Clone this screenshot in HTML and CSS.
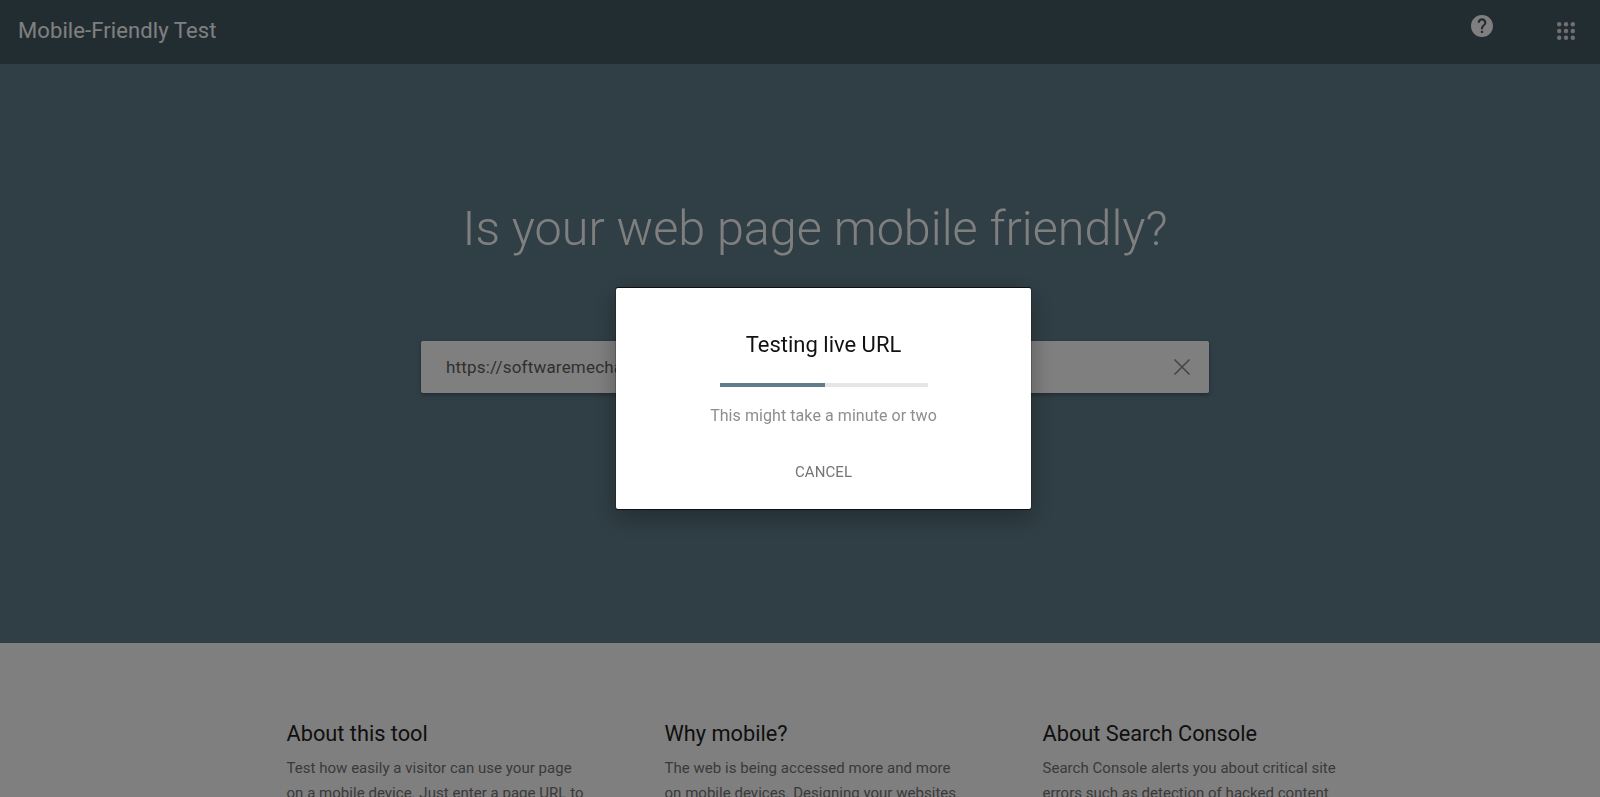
FILE: index.html
```html
<!DOCTYPE html>
<html lang="en">
<head>
    <meta charset="UTF-8">
    <meta name="viewport" content="width=device-width, initial-scale=1.0">
    <title>Mobile-Friendly Test</title>
    <link rel="stylesheet" href="styles.css">
</head>
<body>
    <header class="top-bar">
        <div class="app-title">Mobile-Friendly Test</div>
        <div class="top-actions">
            <svg class="help-icon" viewBox="0 0 24 24" aria-label="Help">
                <path fill="#fff" d="M12 1C5.9 1 1 5.9 1 12s4.900 11 11 11 11-4.900 11-11S18.100 1 12 1zm1.100 18h-2.200v-2.200h2.200V19zm2.300-7.900l-1 1c-.8.800-1.300 1.500-1.300 3.100h-2.200v-.5c0-1.200.5-2.300 1.300-3.100l1.400-1.400c.4-.4.600-.9.600-1.500 0-1.200-1-2.200-2.200-2.200S9.800 7.500 9.800 8.700H7.600c0-2.400 2-4.400 4.400-4.400s4.400 2 4.400 4.400c0 1-.4 1.800-1 2.400z"/>
            </svg>
            <svg class="apps-icon" viewBox="0 0 18 18" aria-label="Apps">
                <circle cx="2.200" cy="2.200" r="2.200"/><circle cx="9" cy="2.200" r="2.200"/><circle cx="15.800" cy="2.200" r="2.200"/>
                <circle cx="2.200" cy="9" r="2.200"/><circle cx="9" cy="9" r="2.200"/><circle cx="15.800" cy="9" r="2.200"/>
                <circle cx="2.200" cy="15.800" r="2.200"/><circle cx="9" cy="15.800" r="2.200"/><circle cx="15.800" cy="15.800" r="2.200"/>
            </svg>
        </div>
    </header>

    <section class="hero">
        <h1>Is your web page mobile friendly?</h1>
        <div class="url-box">
            <span class="url-text">https://softwaremechanic.example/</span>
            <svg class="clear-icon" viewBox="0 0 18 18" aria-label="Clear">
                <path d="M1.500 1.500l15 15M16.500 1.500l-15 15"/>
            </svg>
        </div>
    </section>

    <section class="info">
        <div class="info-col">
            <h2>About this tool</h2>
            <p>Test how easily a visitor can use your page on a mobile device. Just enter a page URL to</p>
        </div>
        <div class="info-col">
            <h2>Why mobile?</h2>
            <p>The web is being accessed more and more on mobile devices. Designing your websites</p>
        </div>
        <div class="info-col">
            <h2>About Search Console</h2>
            <p>Search Console alerts you about critical site errors such as detection of hacked content</p>
        </div>
    </section>

    <!-- Dimmed backdrop + dialog -->
    <div class="scrim">
        <div class="dialog">
            <div class="dialog-title">Testing live URL</div>
            <div class="progress"><div class="progress-fill"></div></div>
            <div class="dialog-note">This might take a minute or two</div>
            <button class="cancel-btn">CANCEL</button>
        </div>
    </div>
</body>
</html>
```

FILE: styles.css
```css
html, body {
    height: 100%;
}

body {
    margin: 0;
    font-family: Roboto, Arial, sans-serif;
    background-color: #fff;
    overflow: hidden;
}

.top-bar {
    height: 64px;
    background-color: #455a64;
    display: flex;
    align-items: center;
    justify-content: space-between;
    padding: 0 25px 4px 18px;
    box-sizing: border-box;
}

.app-title {
    color: #fff;
    font-size: 22px;
    font-weight: 400;
    letter-spacing: 0.1px;
}

.top-actions {
    display: flex;
    align-items: center;
    gap: 63px;
}

.help-icon {
    width: 24px;
    height: 24px;
    display: block;
    margin-bottom: 9px;
}

.apps-icon {
    width: 18px;
    height: 18px;
    display: block;
    fill: #e0e0e0;
    margin-top: 1px;
}

.hero {
    height: 579px;
    background-color: #607d8b;
    box-sizing: border-box;
    padding: 137px 0 0 30px;
    display: flex;
    flex-direction: column;
    align-items: center;
}

h1 {
    margin: 0;
    color: #fff;
    font-size: 48.5px;
    font-weight: 300;
    line-height: 56px;
}

.url-box {
    width: 788px;
    height: 52px;
    margin-top: 84px;
    background-color: #fff;
    border-radius: 2px;
    box-shadow: 0 2px 4px rgba(0, 0, 0, 0.3);
    display: flex;
    align-items: center;
    justify-content: space-between;
    padding: 0 18px 0 25px;
    box-sizing: border-box;
}

.url-text {
    font-size: 17px;
    letter-spacing: 0.2px;
    color: #5f5f5f;
}

.clear-icon {
    width: 18px;
    height: 18px;
    fill: none;
    stroke: #8a8a8a;
    stroke-width: 1.6;
}

.info {
    display: flex;
    padding: 77px 0 0 286.5px;
}

.info-col {
    width: 300px;
    margin-right: 78px;
}

h2 {
    margin: 0;
    font-size: 21.75px;
    font-weight: 400;
    line-height: 28px;
    color: #212121;
}

.info-col p {
    margin: 8px 0 0;
    font-size: 15px;
    letter-spacing: 0.03px;
    line-height: 25px;
    color: #757575;
}

/* Backdrop over the whole page */
.scrim {
    position: fixed;
    top: 0;
    left: 0;
    right: 0;
    bottom: 0;
    background-color: rgba(0, 0, 0, 0.5);
    display: flex;
    align-items: center;
    justify-content: center;
    padding-left: 47px;
}

.dialog {
    width: 415px;
    height: 221px;
    background-color: #fff;
    border-radius: 2px;
    box-shadow: 0 -1px 0 #111, 0 1px 0 #111, 0 0 0 1px rgba(0, 0, 0, 0.2), 0 8px 24px rgba(0, 0, 0, 0.3);
    box-sizing: border-box;
    padding-top: 43px;
    display: flex;
    flex-direction: column;
    align-items: center;
}

.dialog-title {
    font-size: 22px;
    line-height: 28px;
    color: #111;
}

.progress {
    width: 208px;
    height: 4px;
    margin-top: 24px;
    background-color: #e6e6e6;
}

.progress-fill {
    width: 105px;
    height: 100%;
    background-color: #607d8b;
}

.dialog-note {
    margin-top: 17px;
    font-size: 16px;
    letter-spacing: 0.07px;
    line-height: 24px;
    color: #8e8e8e;
}

.cancel-btn {
    margin-top: 34px;
    padding: 0;
    border: none;
    background: none;
    font-family: inherit;
    font-size: 15px;
    letter-spacing: 0.1px;
    line-height: 20px;
    color: #757575;
    cursor: pointer;
}
```
